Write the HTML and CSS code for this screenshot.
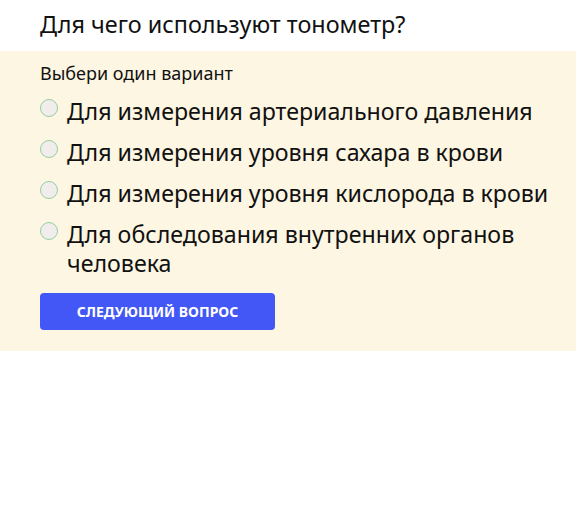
FILE: index.html
```html
<!DOCTYPE html>
<html lang="ru">
<head>
    <meta charset="UTF-8">
    <meta name="viewport" content="width=device-width, initial-scale=1.0">
    <title>Тест</title>
    <link rel="stylesheet" href="styles.css">
</head>
<body>
    <h1 class="question">Для чего используют тонометр?</h1>
    <div class="panel">
        <p class="hint">Выбери один вариант</p>
        <ul class="options">
            <li class="option"><span class="radio"></span><span class="label">Для измерения артериального давления</span></li>
            <li class="option"><span class="radio"></span><span class="label">Для измерения уровня сахара в крови</span></li>
            <li class="option"><span class="radio"></span><span class="label">Для измерения уровня кислорода в крови</span></li>
            <li class="option"><span class="radio"></span><span class="label">Для обследования внутренних органов человека</span></li>
        </ul>
        <button class="next-button">Следующий вопрос</button>
    </div>
</body>
</html>
```
FILE: styles.css
```css
body {
    font-family: "Noto Sans", "Open Sans", sans-serif;
    background-color: #ffffff;
    color: #111111;
    margin: 0;
}

.question {
    font-size: 23.4px;
    font-weight: normal;
    line-height: 30px;
    margin: 0;
    padding: 9px 40px 12px;
}

.panel {
    background-color: #fdf6e2;
    padding: 10px 40px 21px;
}

.hint {
    font-size: 18px;
    line-height: 24px;
    margin: 0 0 12px;
}

.options {
    list-style: none;
    margin: 0;
    padding: 0;
    width: 530px;
}

.option {
    display: flex;
    align-items: flex-start;
    gap: 9px;
    font-size: 23.2px;
    line-height: 29px;
    margin-bottom: 12px;
}

.radio {
    flex: none;
    width: 16px;
    height: 16px;
    margin-top: 2px;
    border: 1px solid #93cfa2;
    border-radius: 50%;
    background-color: #f2eded;
}

.next-button {
    display: block;
    width: 235px;
    height: 37px;
    margin-top: 15px;
    background-color: #4257f5;
    color: #ffffff;
    border: none;
    border-radius: 4px;
    font-family: "Noto Sans", sans-serif;
    font-size: 14px;
    font-weight: bold;
    text-transform: uppercase;
    cursor: pointer;
}
```
